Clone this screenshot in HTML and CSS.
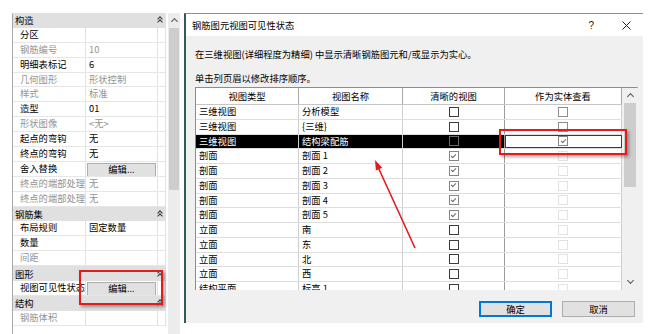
FILE: index.html
```html
<!DOCTYPE html>
<html lang="zh-CN">
<head>
    <meta charset="UTF-8">
    <title>钢筋图元视图可见性状态</title>
    <link rel="stylesheet" href="styles.css">
</head>
<body>
    <div class="page">
        <!-- properties palette -->
        <div class="props">
            <div class="phead"><span>构造</span><i class="fold"></i></div>
            <div class="prow"><span>分区</span><span></span><span></span></div>
            <div class="prow dim"><span>钢筋编号</span><span>10</span><span></span></div>
            <div class="prow"><span>明细表标记</span><span>6</span><span></span></div>
            <div class="prow dim"><span>几何图形</span><span>形状控制</span><span></span></div>
            <div class="prow dim"><span>样式</span><span>标准</span><span></span></div>
            <div class="prow"><span>造型</span><span>01</span><span></span></div>
            <div class="prow dim"><span>形状图像</span><span>&lt;无&gt;</span><span></span></div>
            <div class="prow"><span>起点的弯钩</span><span>无</span><span></span></div>
            <div class="prow"><span>终点的弯钩</span><span>无</span><span></span></div>
            <div class="prow"><span>舍入替换</span><span class="btncell"><b class="pbtn">编辑...</b></span><span></span></div>
            <div class="prow dim"><span>终点的端部处理</span><span>无</span><span></span></div>
            <div class="prow dim"><span>终点的端部处理</span><span>无</span><span></span></div>
            <div class="phead"><span>钢筋集</span><i class="fold"></i></div>
            <div class="prow"><span>布局规则</span><span>固定数量</span><span></span></div>
            <div class="prow"><span>数量</span><span></span><span></span></div>
            <div class="prow dim"><span>间距</span><span></span><span></span></div>
            <div class="phead"><span>图形</span><i class="fold"></i></div>
            <div class="prow"><span>视图可见性状态</span><span class="btncell"><b class="pbtn">编辑...</b></span><span></span></div>
            <div class="phead"><span>结构</span><i class="fold"></i></div>
            <div class="prow dim"><span>钢筋体积</span><span></span><span></span></div>
        </div>
        <div class="pscroll">
            <span class="arrow up"></span>
            <div class="pthumb"></div>
        </div>

        <!-- dialog -->
        <div class="dialog">
            <div class="titlebar">
                <span class="title">钢筋图元视图可见性状态</span>
                <span class="help">?</span>
                <svg class="close" width="9" height="9" viewBox="0 0 9 9"><path d="M0.5 0.5L8.5 8.5M8.5 0.5L0.5 8.5" stroke="#222" stroke-width="1" fill="none"/></svg>
            </div>
            <div class="dbody">
                <p class="note first">在三维视图(详细程度为精细) 中显示清晰钢筋图元和/或显示为实心。</p>
                <p class="note">单击列页眉以修改排序顺序。</p>
                <div class="grid">
                    <div class="tbl">
                        <div class="thead">
                            <span>视图类型</span><span>视图名称</span><span>清晰的视图</span><span>作为实体查看</span>
                        </div>
                        <div class="trow"><span>三维视图</span><span>分析模型</span><span><i class="cb"></i></span><span><i class="cb light"></i></span></div>
                        <div class="trow"><span>三维视图</span><span>{三维}</span><span><i class="cb"></i></span><span><i class="cb light"></i></span></div>
                        <div class="trow selected"><span>三维视图</span><span>结构梁配筋</span><span><i class="cb dark"></i></span><span class="focus"><i class="cb on"></i></span></div>
                        <div class="trow"><span>剖面</span><span>剖面 1</span><span><i class="cb on"></i></span><span><i class="cb off"></i></span></div>
                        <div class="trow"><span>剖面</span><span>剖面 2</span><span><i class="cb on"></i></span><span><i class="cb off"></i></span></div>
                        <div class="trow"><span>剖面</span><span>剖面 3</span><span><i class="cb on"></i></span><span><i class="cb off"></i></span></div>
                        <div class="trow"><span>剖面</span><span>剖面 4</span><span><i class="cb on"></i></span><span><i class="cb off"></i></span></div>
                        <div class="trow"><span>剖面</span><span>剖面 5</span><span><i class="cb on"></i></span><span><i class="cb off"></i></span></div>
                        <div class="trow"><span>立面</span><span>南</span><span><i class="cb"></i></span><span><i class="cb off"></i></span></div>
                        <div class="trow"><span>立面</span><span>东</span><span><i class="cb"></i></span><span><i class="cb off"></i></span></div>
                        <div class="trow"><span>立面</span><span>北</span><span><i class="cb"></i></span><span><i class="cb off"></i></span></div>
                        <div class="trow"><span>立面</span><span>西</span><span><i class="cb"></i></span><span><i class="cb off"></i></span></div>
                        <div class="trow"><span>结构平面</span><span>标高 1</span><span><i class="cb"></i></span><span><i class="cb off"></i></span></div>
                    </div>
                    <div class="tscroll">
                        <span class="arrow up"></span>
                        <div class="tthumb"></div>
                        <span class="arrow down"></span>
                    </div>
                </div>
                <div class="actions">
                    <button class="btn primary">确定</button>
                    <button class="btn">取消</button>
                </div>
            </div>
        </div>
    </div>

    <!-- red annotations drawn over the screenshot -->
    <div class="mark mark-left"></div>
    <div class="mark mark-right"></div>
    <svg class="pointer" width="662" height="334" viewBox="0 0 662 334">
        <line x1="415" y1="248" x2="378" y2="167" stroke="#e31b1b" stroke-width="1.6"/>
        <polygon points="375,160 382.3,167.7 375.9,170.5" fill="#e31b1b"/>
    </svg>
</body>
</html>
```

FILE: styles.css
```css
body {
    margin: 0;
    width: 662px;
    height: 334px;
    overflow: hidden;
    position: relative;
    background: #fff;
    color: #000;
    font-family: "Noto Sans CJK SC", "Microsoft YaHei", sans-serif;
    font-size: 9.3px;
}

.page {
    display: flex;
    padding: 13px 0 0 12px;
}

/* properties palette */
.props {
    width: 154px;
    border-left: 1px solid #a9a9a9;
    box-sizing: border-box;
    flex: none;
}

.phead {
    height: 14.9px;
    background: #e0e0e0;
    padding: 0 4px 0 2px;
    display: flex;
    justify-content: space-between;
    align-items: center;
    box-sizing: border-box;
}

.fold {
    width: 5px;
    height: 6px;
    position: relative;
}

.fold::before,
.fold::after {
    content: "";
    position: absolute;
    left: 1px;
    width: 3px;
    height: 3px;
    border-left: 1px solid #333;
    border-top: 1px solid #333;
    transform: rotate(45deg);
}

.fold::before { top: 0; }
.fold::after { top: 3px; }

.prow {
    display: grid;
    grid-template-columns: 73px 72px 8px;
    height: 14.9px;
    border-bottom: 1px solid #e6e6e6;
    box-sizing: border-box;
    line-height: 13.9px;
    white-space: nowrap;
}

.prow > span {
    border-right: 1px solid #e2e2e2;
    padding-left: 3px;
    overflow: hidden;
}

.prow > span:first-child {
    padding-left: 7px;
}

.prow.dim {
    color: #939393;
}

.btncell {
    padding: 0 !important;
}

.pbtn {
    display: block;
    margin: 1px 1px 0;
    height: 12px;
    line-height: 11px;
    font-weight: normal;
    text-align: center;
    background: #e1e1e1;
    border: 1px solid #adadad;
}

.pscroll {
    width: 12px;
    height: 321px;
    margin-left: 2px;
    background: #ececec;
    position: relative;
    flex: none;
}

.pthumb {
    position: absolute;
    top: 15px;
    left: 1px;
    right: 1px;
    height: 162px;
    background: #cdcdcd;
}

.arrow {
    position: absolute;
    left: 50%;
    width: 4px;
    height: 4px;
    margin-left: -2px;
    border-left: 1px solid #555;
    border-top: 1px solid #555;
}

.arrow.up {
    top: 6px;
    transform: rotate(45deg);
}

.arrow.down {
    bottom: 7px;
    transform: rotate(225deg);
}

/* dialog */
.dialog {
    margin-left: 4px;
    width: 459px;
    height: 310px;
    border-left: 2px solid #2f5a63;
    border-top: 1px solid #8e8e8e;
    box-sizing: border-box;
    background: #f0f0f0;
    flex: none;
}

.titlebar {
    height: 22px;
    background: #fff;
    display: flex;
    align-items: center;
    padding-left: 6px;
}

.title {
    flex: 1;
}

.help {
    font-family: "Liberation Sans", sans-serif;
    font-size: 10px;
    color: #222;
    margin-right: 28px;
}

.close {
    margin-right: 12px;
}

.dbody {
    padding: 0 5px 0 9px;
}

.note {
    margin: 0;
    height: 12px;
    line-height: 12px;
}

.note.first {
    margin-top: 12px;
    margin-bottom: 12px;
}

.grid {
    display: flex;
    margin-top: 3px;
    height: 203px;
    border: 1px solid #8c8c8c;
    border-right-color: #c8c8c8;
    border-bottom: none;
    box-sizing: border-box;
    width: 443px;
    background: #fff;
}

.tbl {
    width: 426px;
    overflow: hidden;
    flex: none;
}

.thead,
.trow {
    display: grid;
    grid-template-columns: 103px 104px 102px 117px;
    box-sizing: border-box;
}

.thead {
    height: 17px;
    border-bottom: 1px solid #c6c6c6;
    line-height: 16px;
    text-align: center;
}

.thead > span {
    border-right: 1px solid #a6a6a6;
}

.trow {
    height: 14.75px;
    border-bottom: 1px solid #dedede;
    line-height: 13.75px;
}

.trow > span {
    border-right: 1px solid #cfcfcf;
    padding-left: 3px;
    white-space: nowrap;
}

.trow > span:nth-child(3),
.trow > span:nth-child(4) {
    padding-left: 0;
    display: flex;
    justify-content: center;
    align-items: center;
}

.trow > span:nth-child(3) {
    border-right-color: #9a9a9a;
}

.trow.selected > span {
    background: #000;
    color: #fff;
}

.trow.selected > span.focus {
    background: #fff;
    outline: 1px solid #3a3a3a;
    outline-offset: -1px;
}

.cb {
    width: 10px;
    height: 10px;
    border: 1px solid #3c3c3c;
    box-sizing: border-box;
    background: #fff;
    display: flex;
    justify-content: center;
    align-items: center;
}

.cb.light { border-color: #8d8d8d; }
.cb.off { border-color: #e3e3e3; }
.cb.dark { border-color: #6a6a6a; background: #000; }
.cb.on { border-color: #858585; }

.cb.on::after {
    content: "";
    width: 4px;
    height: 2px;
    margin-top: -2px;
    border-left: 1px solid #6a6a6a;
    border-bottom: 1px solid #6a6a6a;
    transform: rotate(-45deg);
}

.tscroll {
    width: 16px;
    position: relative;
    background: #f0f0f0;
    flex: none;
}

.tthumb {
    position: absolute;
    top: 15px;
    left: 2px;
    right: 2px;
    height: 84px;
    background: #cdcdcd;
}

.actions {
    display: flex;
    justify-content: flex-end;
    gap: 10px;
    margin-top: 11px;
    padding-right: 3px;
}

.btn {
    width: 73px;
    height: 16px;
    padding: 0;
    font: inherit;
    color: #000;
    background: #e1e1e1;
    border: 1px solid #adadad;
}

.btn.primary {
    border-color: #0078d7;
    box-shadow: inset 0 0 0 1px #0078d7;
}

/* annotations */
.mark {
    position: absolute;
    border: 2px solid #e31b1b;
    box-shadow: 2px 2px 3px rgba(0, 0, 0, 0.35);
    box-sizing: border-box;
}

.mark-left {
    left: 79px;
    top: 270px;
    width: 84px;
    height: 35px;
}

.mark-right {
    left: 499px;
    top: 129px;
    width: 128px;
    height: 26px;
}

.pointer {
    position: absolute;
    left: 0;
    top: 0;
    pointer-events: none;
}
```
